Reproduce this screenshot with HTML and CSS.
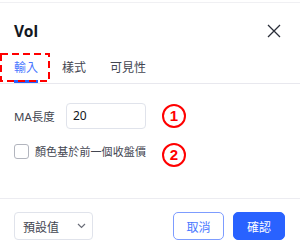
FILE: index.html
```html
<!DOCTYPE html>
<html lang="zh-Hant">
<head>
<meta charset="utf-8">
<link rel="stylesheet" href="styles.css">
</head>
<body>
<div class="dialog">
  <div class="header">
    <span class="title">Vol</span>
    <button class="close" aria-label="close">
      <svg width="14" height="14" viewBox="0 0 14 14"><path d="M1 1L13 13M13 1L1 13" stroke="#2a2e39" stroke-width="1.3" fill="none"/></svg>
    </button>
  </div>
  <div class="tabs">
    <div class="tab active">輸入</div>
    <div class="tab">樣式</div>
    <div class="tab">可見性</div>
    <svg class="mark-box" width="50" height="29" viewBox="0 0 50 29"><rect x="1" y="1" width="48" height="27" fill="none" stroke="#ff0000" stroke-width="2" stroke-dasharray="7 4"/></svg>
  </div>
  <div class="content">
    <div class="row">
      <label class="label">MA長度</label>
      <div class="input">20</div>
      <span class="badge badge1">1</span>
    </div>
    <div class="row row-check">
      <span class="checkbox"></span>
      <span class="check-label">顏色基於前一個收盤價</span>
      <span class="badge badge2">2</span>
    </div>
  </div>
  <div class="footer">
    <div class="select">
      <span>預設值</span>
      <svg width="9" height="6" viewBox="0 0 9 6"><path d="M1 1l3.5 3.5L8 1" stroke="#6a6d78" stroke-width="1.2" fill="none"/></svg>
    </div>
    <div class="actions">
      <button class="btn btn-outline">取消</button>
      <button class="btn btn-primary">確認</button>
    </div>
  </div>
</div>
</body>
</html>
```
FILE: styles.css
```css
* { box-sizing: border-box; }
html, body { margin: 0; padding: 0; background: #fff; }
body {
  width: 300px;
  height: 250px;
  overflow: hidden;
  font-family: "Noto Sans", "Noto Sans CJK TC", sans-serif;
  color: #2a2e39;
}
.dialog {
  width: 300px;
  height: 250px;
  display: flex;
  flex-direction: column;
}
.header {
  margin-top: 2px;
  border-top: 1px solid #f0f0f3;
  padding: 17px 15px 0 14px;
  height: 39px;
  display: flex;
  align-items: flex-start;
  justify-content: space-between;
}
.title {
  font-size: 15.5px;
  font-weight: 700;
  line-height: 22px;
  color: #131722;
}
.close {
  border: 0;
  background: none;
  padding: 0;
  margin-top: 4px;
  margin-right: 4px;
  width: 14px;
  height: 14px;
  display: block;
}
.close svg { display: block; }
.tabs {
  position: relative;
  height: 43px;
  border-bottom: 1px solid #e8e8ee;
  display: flex;
  gap: 24px;
  padding-left: 14px;
}
.tab {
  position: relative;
  padding-top: 17px;
  font-family: "Noto Sans CJK TC", sans-serif;
  font-size: 12px;
  line-height: 18px;
  color: #434651;
}
.tab.active { color: #4a78ff; }
.tab.active::after {
  content: "";
  position: absolute;
  left: 0;
  right: 0;
  bottom: 0;
  height: 3px;
  background: #2962ff;
}
.mark-box {
  position: absolute;
  left: 0;
  top: 12px;
}
.content {
  flex: 1;
  padding: 19px 14px 0 14px;
  border-bottom: 1px solid #ececf1;
}
.row {
  position: relative;
  display: flex;
  align-items: center;
}
.label {
  width: 52px;
  font-size: 11.5px;
  font-family: "Noto Sans", "Noto Sans CJK TC", sans-serif;
  color: #434651;
}
.input {
  width: 80px;
  height: 26px;
  border: 1px solid #e0e3eb;
  border-radius: 4px;
  padding-left: 6px;
  font-size: 12px;
  line-height: 24px;
  color: #131722;
}
.row-check { margin-top: 14px; }
.checkbox {
  width: 15px;
  height: 15px;
  border: 1px solid #b2b5be;
  border-radius: 3px;
  margin-right: 6px;
}
.check-label {
  font-family: "Noto Sans CJK TC", sans-serif;
  font-size: 11px;
  color: #434651;
  letter-spacing: 0.1px;
}
.badge {
  position: absolute;
  left: 148px;
  width: 24px;
  height: 24px;
  border: 2px solid #ff0000;
  border-radius: 50%;
  color: #ff0000;
  font-size: 15px;
  font-weight: 700;
  line-height: 20px;
  text-align: center;
  font-family: "Liberation Sans", sans-serif;
}
.badge1 { top: 1px; }
.badge2 { top: 0px; }
.footer {
  height: 51px;
  padding: 13px 15px 0 14px;
  display: flex;
  justify-content: space-between;
  align-items: flex-start;
}
.select {
  width: 79px;
  height: 28px;
  border: 1px solid #e0e3eb;
  border-radius: 4px;
  padding: 0 6px 0 8px;
  display: flex;
  align-items: center;
  justify-content: space-between;
  font-family: "Noto Sans CJK TC", sans-serif;
  font-size: 12px;
  color: #434651;
}
.actions {
  display: flex;
  gap: 9px;
}
.btn {
  height: 28px;
  width: 52px;
  border-radius: 5px;
  font-family: "Noto Sans CJK TC", sans-serif;
  font-size: 12px;
  padding: 0;
}
.btn-outline {
  width: 51px;
  background: #fff;
  border: 1px solid #7d9cff;
  color: #4a78ff;
}
.btn-primary {
  background: #2962ff;
  border: 1px solid #2962ff;
  color: #fff;
}
```
